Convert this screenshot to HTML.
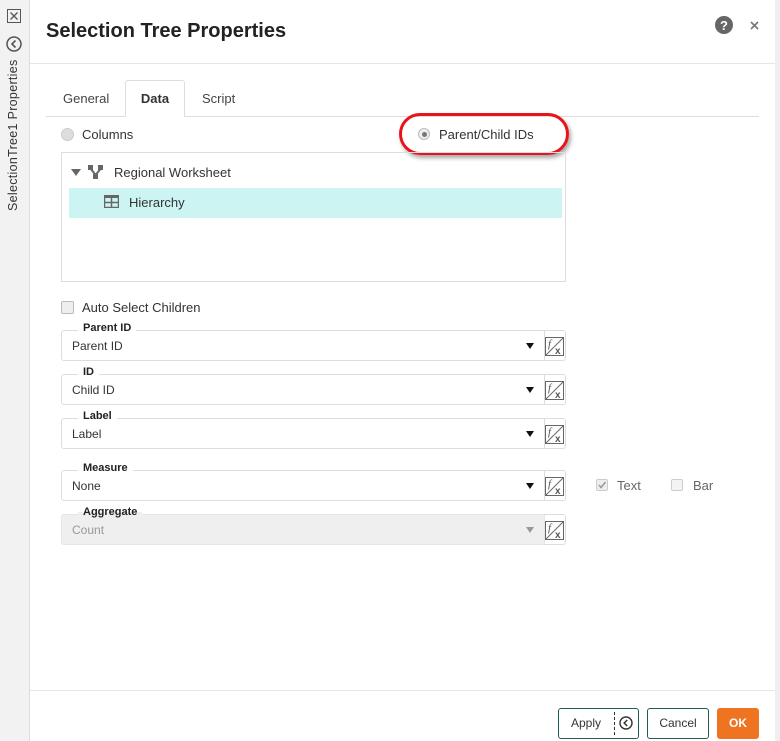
<!DOCTYPE html>
<html><head><style>
*{box-sizing:border-box;margin:0;padding:0}
body{width:780px;height:741px;position:relative;background:#fff;font-family:"Liberation Sans",sans-serif;font-size:13px;color:#333;overflow:hidden}
.abs{position:absolute}
.side{left:0;top:0;width:30px;height:741px;background:#f2f2f2;border-right:1px solid #ddd}
.rstrip{left:775px;top:0;width:5px;height:741px;background:#efefef}
.field{position:absolute;left:61px;width:484px;height:31px;border:1px solid #ddd;border-radius:3px 0 0 3px}
.field .lg{position:absolute;left:16px;top:-9px;background:#fff;padding:0 5px;font-size:11px;font-weight:bold;color:#222}
.field .v{position:absolute;left:10px;top:8px;font-size:12px;color:#333}
.field .ar{position:absolute;right:10px;top:12px;width:0;height:0;border-left:4.5px solid transparent;border-right:4.5px solid transparent;border-top:6px solid #111}
.fx{position:absolute;left:544px;width:22px;height:31px;border:1px solid #ddd;border-left:none;border-radius:0 3px 3px 0}
.fx svg{position:absolute;left:1px;top:6px}
.btn{position:absolute;top:708px;height:31px;border:1px solid #1f5d56;border-radius:3px;font-size:12px;color:#333;text-align:center;line-height:29px}
</style></head><body>
<div class="abs side"></div>
<div class="abs rstrip"></div>
<svg class="abs" style="left:7px;top:9px" width="14" height="14"><rect x="0.5" y="0.5" width="13" height="13" fill="none" stroke="#555"/><path d="M3.5 3.5L10.5 10.5M10.5 3.5L3.5 10.5" stroke="#555" stroke-width="1.3"/></svg>
<svg class="abs" style="left:6px;top:36px" width="16" height="16"><circle cx="8" cy="8" r="7" fill="none" stroke="#555" stroke-width="1.5"/><path d="M9.5 4.5L6 8l3.5 3.5" fill="none" stroke="#555" stroke-width="1.6"/></svg>
<div class="abs" style="left:6px;top:211px;transform:rotate(-90deg);transform-origin:0 0;font-size:12.5px;letter-spacing:0.3px;color:#333;white-space:nowrap">SelectionTree1 Properties</div>

<div class="abs" style="left:46px;top:20px;font-size:20px;font-weight:bold;color:#222">Selection Tree Properties</div>
<svg class="abs" style="left:715px;top:16px" width="18" height="18"><circle cx="9" cy="9" r="9" fill="#666"/><text x="9" y="14" text-anchor="middle" font-family="Liberation Sans" font-weight="bold" font-size="13" fill="#fff">?</text></svg>
<svg class="abs" style="left:750px;top:21px" width="9" height="9"><path d="M1 1L8 8M8 1L1 8" stroke="#777" stroke-width="1.6"/></svg>
<div class="abs" style="left:30px;top:63px;width:745px;height:1px;background:#e6e6e6"></div>

<div class="abs" style="left:46px;top:116px;width:713px;height:1px;background:#ddd"></div>
<div class="abs" style="left:63px;top:91px;color:#444">General</div>
<div class="abs" style="left:125px;top:80px;width:60px;height:37px;border:1px solid #ddd;border-bottom:none;background:#fff;border-radius:3px 3px 0 0;text-align:center;line-height:36px;font-weight:bold;color:#333">Data</div>
<div class="abs" style="left:202px;top:91px;color:#444">Script</div>

<div class="abs" style="left:61px;top:128px;width:13px;height:13px;border-radius:50%;background:#ddd;border:1px solid #ccc"></div>
<div class="abs" style="left:82px;top:127px">Columns</div>
<div class="abs" style="left:399px;top:113px;width:170px;height:42px;border:3px solid #e8141c;border-radius:21px;box-shadow:2px 3px 4px rgba(0,0,0,0.35)"></div>
<div class="abs" style="left:418px;top:128px;width:12px;height:12px;border-radius:50%;background:#eee;border:1px solid #bbb"></div>
<div class="abs" style="left:421.5px;top:131.5px;width:5px;height:5px;border-radius:50%;background:#777"></div>
<div class="abs" style="left:439px;top:127px;font-size:13px">Parent/Child IDs</div>

<div class="abs" style="left:61px;top:152px;width:505px;height:130px;border:1px solid #ddd"></div>
<div class="abs" style="left:71px;top:169px;width:0;height:0;border-left:5px solid transparent;border-right:5px solid transparent;border-top:7px solid #666"></div>
<svg class="abs" style="left:88px;top:164px" width="16" height="16"><rect x="0" y="1" width="5" height="5" fill="#666"/><rect x="10" y="1" width="5" height="5" fill="#666"/><rect x="5" y="10" width="5" height="5" fill="#666"/><path d="M3 5L7.5 11M12.5 5L7.5 11" stroke="#666" stroke-width="2"/></svg>
<div class="abs" style="left:114px;top:165px">Regional Worksheet</div>
<div class="abs" style="left:69px;top:188px;width:493px;height:30px;background:#ccf4f2"></div>
<svg class="abs" style="left:104px;top:195px" width="15" height="13"><rect x="0.5" y="0.5" width="14" height="12" fill="none" stroke="#666" stroke-width="1.5"/><rect x="0" y="0" width="15" height="3" fill="#666"/><path d="M7.5 1v11M1 7.5h13" stroke="#666" stroke-width="1.5"/></svg>
<div class="abs" style="left:129px;top:195px">Hierarchy</div>

<div class="abs" style="left:61px;top:301px;width:13px;height:13px;border-radius:2px;background:#eee;border:1px solid #bbb"></div>
<div class="abs" style="left:82px;top:300px">Auto Select Children</div>

<div class="field" style="top:330px"><span class="lg">Parent ID</span><span class="v">Parent ID</span><span class="ar"></span></div>
<div class="fx" style="top:330px"><svg width="19" height="19"><rect x="0.5" y="0.5" width="18" height="18" fill="none" stroke="#666"/><path d="M1 18L18 1" stroke="#666"/><text x="3" y="10" font-size="11" font-style="italic" font-family="Liberation Serif" fill="#555">f</text><text x="10" y="17" font-size="10" font-weight="bold" font-family="Liberation Sans" fill="#555">x</text></svg></div>
<div class="field" style="top:374px"><span class="lg">ID</span><span class="v">Child ID</span><span class="ar"></span></div>
<div class="fx" style="top:374px"><svg width="19" height="19"><rect x="0.5" y="0.5" width="18" height="18" fill="none" stroke="#666"/><path d="M1 18L18 1" stroke="#666"/><text x="3" y="10" font-size="11" font-style="italic" font-family="Liberation Serif" fill="#555">f</text><text x="10" y="17" font-size="10" font-weight="bold" font-family="Liberation Sans" fill="#555">x</text></svg></div>
<div class="field" style="top:418px"><span class="lg">Label</span><span class="v">Label</span><span class="ar"></span></div>
<div class="fx" style="top:418px"><svg width="19" height="19"><rect x="0.5" y="0.5" width="18" height="18" fill="none" stroke="#666"/><path d="M1 18L18 1" stroke="#666"/><text x="3" y="10" font-size="11" font-style="italic" font-family="Liberation Serif" fill="#555">f</text><text x="10" y="17" font-size="10" font-weight="bold" font-family="Liberation Sans" fill="#555">x</text></svg></div>
<div class="field" style="top:470px"><span class="lg">Measure</span><span class="v">None</span><span class="ar"></span></div>
<div class="fx" style="top:470px"><svg width="19" height="19"><rect x="0.5" y="0.5" width="18" height="18" fill="none" stroke="#666"/><path d="M1 18L18 1" stroke="#666"/><text x="3" y="10" font-size="11" font-style="italic" font-family="Liberation Serif" fill="#555">f</text><text x="10" y="17" font-size="10" font-weight="bold" font-family="Liberation Sans" fill="#555">x</text></svg></div>
<div class="field" style="top:514px;background:#efefef;border-color:#e6e6e6"><span class="lg" style="background:linear-gradient(#fff 50%,#efefef 50%)">Aggregate</span><span class="v" style="color:#999">Count</span><span class="ar" style="border-top-color:#999"></span></div>
<div class="fx" style="top:514px"><svg width="19" height="19"><rect x="0.5" y="0.5" width="18" height="18" fill="none" stroke="#666"/><path d="M1 18L18 1" stroke="#666"/><text x="3" y="10" font-size="11" font-style="italic" font-family="Liberation Serif" fill="#555">f</text><text x="10" y="17" font-size="10" font-weight="bold" font-family="Liberation Sans" fill="#555">x</text></svg></div>

<div class="abs" style="left:596px;top:479px;width:12px;height:12px;border-radius:2px;background:#eee;border:1px solid #ccc"></div>
<svg class="abs" style="left:597px;top:480px" width="10" height="10"><path d="M2 5l2 2.5L8.5 2" fill="none" stroke="#999" stroke-width="1.5"/></svg>
<div class="abs" style="left:617px;top:478px;color:#666">Text</div>
<div class="abs" style="left:671px;top:479px;width:12px;height:12px;border-radius:2px;background:#f3f3f3;border:1px solid #ccc"></div>
<div class="abs" style="left:693px;top:478px;color:#666">Bar</div>

<div class="abs" style="left:30px;top:690px;width:745px;height:1px;background:#e6e6e6"></div>
<div class="btn" style="left:558px;width:81px;text-align:left;padding-left:12px">Apply<span style="position:absolute;left:55px;top:3px;height:23px;border-left:1px dashed #333"></span><svg style="position:absolute;left:60px;top:7px" width="14" height="14"><circle cx="7" cy="7" r="6" fill="none" stroke="#333" stroke-width="1.4"/><path d="M8.2 4L5.2 7l3 3" fill="none" stroke="#333" stroke-width="1.5"/></svg></div>
<div class="btn" style="left:647px;width:62px">Cancel</div>
<div class="btn" style="left:717px;width:42px;background:#ef7422;border-color:#ef7422;color:#fff;font-weight:bold">OK</div>
</body></html>
